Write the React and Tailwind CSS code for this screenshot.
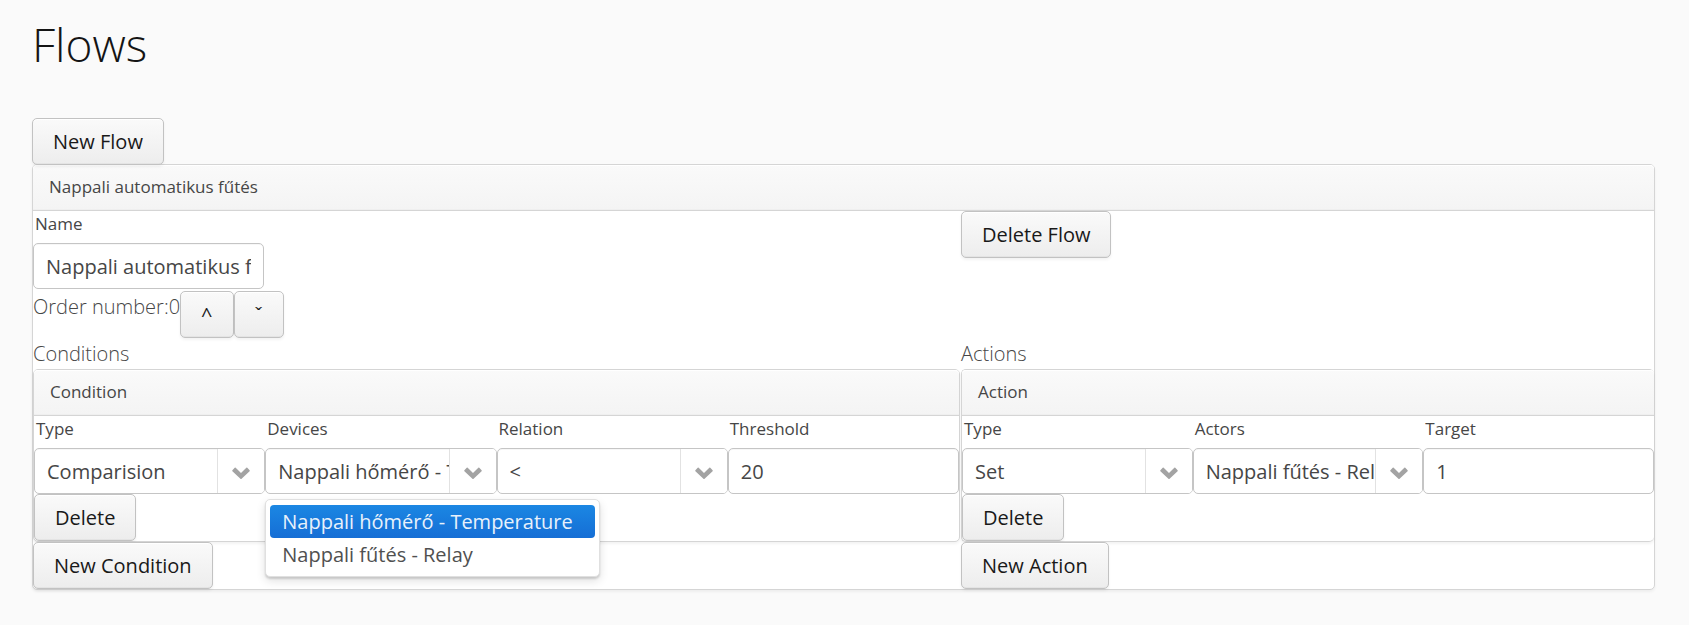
import { useId } from "react";

function Button({ children, className = "px-5" }) {
  return (
    <button
      type="button"
      className={`h-[47px] shrink-0 rounded-[5px] border border-[#c2c2c2] bg-linear-to-b from-[#fafafa] to-[#ededed] text-xl text-[#191919] shadow-[inset_0_1px_0_#ffffff,inset_0_-1px_0_#e4e4e4,0_2px_3px_rgba(0,0,0,0.05)] ${className}`}
    >
      {children}
    </button>
  );
}

function Panel({ title, className = "", children }) {
  return (
    <section
      className={`rounded-[5px] border border-[#d5d5d5] bg-white shadow-[0_2px_3px_rgba(0,0,0,0.05)] ${className}`}
    >
      <h2 className="h-[46px] rounded-t-[4px] border-b border-[#d5d5d5] bg-linear-to-b from-[#fafafa] to-[#f4f4f4] px-4 text-[17px] leading-[44px] text-[#464646] shadow-[inset_0_1px_0_#ffffff,inset_0_-1px_0_#efefef]">
        {title}
      </h2>
      {children}
    </section>
  );
}

const control =
  "block h-[46px] w-full rounded-[5px] border border-[#c5c5c5] bg-white text-xl text-[#464646] shadow-[inset_0_1px_0_#f7f7f7] outline-none";

function Label({ id, children }) {
  return (
    <label htmlFor={id} className="block h-8 pl-0.5 text-[17px] leading-[26px] text-[#464646]">
      {children}
    </label>
  );
}

function TextField({ label, value }) {
  const id = useId();
  return (
    <div className="min-w-0">
      <Label id={id}>{label}</Label>
      <input id={id} type="text" defaultValue={value} className={`${control} px-3`} />
    </div>
  );
}

function SelectField({ label, options, value, children }) {
  const id = useId();
  return (
    <div className="relative min-w-0">
      <Label id={id}>{label}</Label>
      <div className="relative">
        <select
          id={id}
          defaultValue={value}
          className={`${control} appearance-none pt-0.5 pr-8 pl-3 text-clip`}
        >
          {options.map((option) => (
            <option key={option}>{option}</option>
          ))}
        </select>
        <span className="pointer-events-none absolute inset-y-px right-px flex w-[47px] items-center justify-center rounded-r-[4px] border-l border-[#e2e2e2] bg-white">
          <svg viewBox="0 0 18 12" className="mt-1 h-3 w-[18px]" aria-hidden="true">
            <path
              d="M0.4 3.2 L2.7 0.8 Q3.2 0.4 3.7 0.8 L9 6 L14.3 0.8 Q14.8 0.4 15.3 0.8 L17.6 3.2 Q18 3.7 17.6 4.2 L9.6 11.7 Q9 12.1 8.4 11.7 L0.4 4.2 Q0 3.7 0.4 3.2 Z"
              fill="#a3a3a3"
            />
          </svg>
        </span>
      </div>
      {children}
    </div>
  );
}

const devices = ["Nappali hőmérő - Temperature", "Nappali fűtés - Relay"];

function DevicePopup() {
  return (
    <ul
      role="listbox"
      aria-label="Devices"
      className="absolute top-full left-0 z-10 mt-[5px] rounded-[5px] border border-[#e0e0e0] bg-white p-1 pt-[5px] pb-[5px] text-xl leading-[33px] whitespace-nowrap text-[#505050] shadow-[0_4px_10px_rgba(0,0,0,0.12),0_2px_2px_rgba(0,0,0,0.14)]"
    >
      <li
        role="option"
        aria-selected="true"
        className="rounded-[4px] bg-linear-to-b from-[#1b87e3] to-[#166ed5] pr-[22px] pl-3 text-[#e8f1fb]"
      >
        {devices[0]}
      </li>
      <li role="option" aria-selected="false" className="pr-[22px] pl-3">
        {devices[1]}
      </li>
    </ul>
  );
}

export default function App() {
  return (
    <main className="min-h-screen bg-[#fafafa] px-8 pt-3 pb-9 font-['Open_Sans','Noto_Sans',sans-serif] text-xl text-[#464646]">
      <h1 className="text-[46px] leading-[64px] font-light text-[#141414]">Flows</h1>
      <div className="relative mt-[42px] -mb-px flex">
        <Button>New Flow</Button>
      </div>
      <Panel title="Nappali automatikus fűtés" className="mr-0.5">
        <div className="grid grid-cols-[927fr_693fr] gap-x-px">
          <div>
            <div className="w-[231px] pb-0.5">
              <TextField label="Name" value="Nappali automatikus fűtés" />
            </div>
            <div className="flex">
              <span className="leading-[31px] font-light">Order number:0</span>
              <Button>^</Button>
              <Button>ˇ</Button>
            </div>
          </div>
          <div>
            <Button>Delete Flow</Button>
          </div>

          <div className="min-w-0">
            <p className="leading-[31px] font-light">Conditions</p>
            <Panel title="Condition">
              <div className="grid grid-cols-4">
                <SelectField label="Type" value="Comparision" options={["Comparision"]} />
                <SelectField label="Devices" value={devices[0]} options={devices}>
                  <DevicePopup />
                </SelectField>
                <SelectField label="Relation" value="<" options={["<", "=", ">"]} />
                <TextField label="Threshold" value="20" />
              </div>
              <div className="flex">
                <Button>Delete</Button>
              </div>
            </Panel>
            <div className="relative flex">
              <Button>New Condition</Button>
            </div>
          </div>

          <div className="min-w-0">
            <p className="leading-[31px] font-light">Actions</p>
            <Panel title="Action" className="border-r-0">
              <div className="grid grid-cols-3">
                <SelectField label="Type" value="Set" options={["Set"]} />
                <SelectField
                  label="Actors"
                  value="Nappali fűtés - Relay"
                  options={["Nappali fűtés - Relay"]}
                />
                <TextField label="Target" value="1" />
              </div>
              <div className="flex">
                <Button>Delete</Button>
              </div>
            </Panel>
            <div className="relative flex">
              <Button>New Action</Button>
            </div>
          </div>
        </div>
      </Panel>
    </main>
  );
}
